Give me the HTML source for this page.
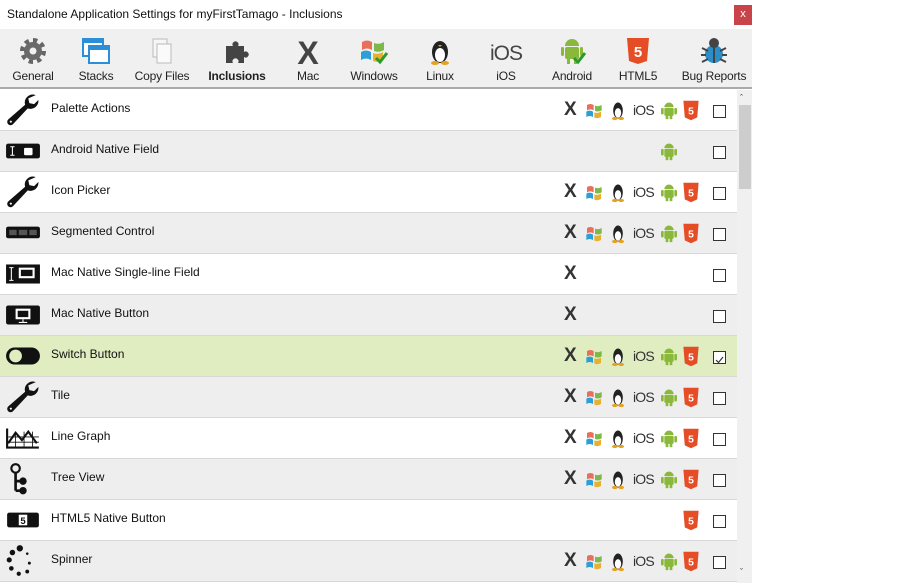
<!DOCTYPE html>
<html><head><meta charset="utf-8"><style>
*{margin:0;padding:0;box-sizing:border-box}
body{width:913px;height:583px;overflow:hidden;background:#fff;font-family:"Liberation Sans",sans-serif;position:relative}
.title{position:absolute;left:7px;top:7px;font-size:12px;color:#111}
.close{position:absolute;left:734px;top:5px;width:18px;height:20px;background:#c9444a;color:#fff;font-size:11px;text-align:center;line-height:19px}
.tb{position:absolute;left:0;top:29px;width:752px;height:60px;background:#f0f0f0;border-bottom:2px solid #aaa}
.tbi{position:absolute;top:7px;width:80px;margin-left:-40px;text-align:center;font-size:12px;color:#222;letter-spacing:-0.2px}
.tbi svg{display:block;margin:0 auto 3px;height:30px}
.row{position:absolute;left:0;width:737px;height:41px;border-bottom:1px solid #d8d8d8}
.row .n{position:absolute;left:51px;top:11px;font-size:12px;color:#111}
.row .ic{position:absolute;left:5px;top:4px;width:36px;height:32px}
.pl{position:absolute;top:11px}
.cb{position:absolute;left:713px;top:15px;width:13px;height:13px;border:1px solid #333;background:#fff}
.ios{font-size:14px;color:#333;letter-spacing:-0.8px}
.sb{position:absolute;left:737px;top:90px;width:15px;height:493px;background:#f0f0f0}
.th{position:absolute;left:739px;top:105px;width:12px;height:84px;background:#cdcdcd}
</style></head><body>
<div class="title">Standalone Application Settings for myFirstTamago - Inclusions</div>
<div class="close">x</div>
<div class="tb">
<div class="tbi" style="left:33px"><svg viewBox="0 0 30 30" width="30"><circle cx="15" cy="15" r="10" fill="none" stroke="#666" stroke-width="6" stroke-dasharray="4 3.8"/><circle cx="15" cy="15" r="9" fill="#6a6a6a"/><circle cx="15" cy="15" r="3.5" fill="#f0f0f0"/></svg>General</div>
<div class="tbi" style="left:96px"><svg viewBox="0 0 30 30" width="30"><rect x="2" y="3" width="20" height="17" fill="#fff" stroke="#2a8fd8" stroke-width="2"/><rect x="2" y="3" width="20" height="4" fill="#2a8fd8"/><rect x="8" y="10" width="20" height="17" fill="#fff" stroke="#2a8fd8" stroke-width="2"/><rect x="8" y="10" width="20" height="4" fill="#2a8fd8"/></svg>Stacks</div>
<div class="tbi" style="left:162px"><svg viewBox="0 0 30 30" width="30"><rect x="6" y="3" width="14" height="18" fill="#f6f6f6" stroke="#bbb"/><rect x="10" y="8" width="14" height="19" fill="#fafafa" stroke="#bbb"/></svg>Copy Files</div>
<div class="tbi" style="left:237px;font-weight:bold"><svg viewBox="0 0 30 30" width="30"><path d="M4 10h7a3 3 0 1 1 5 0h6v6a3 3 0 1 1 0 5v6h-6a3 3 0 1 0-5 0H4z" fill="#444"/></svg>Inclusions</div>
<div class="tbi" style="left:308px"><svg viewBox="0 0 30 30" width="30"><text x="15" y="28" font-size="32" font-weight="bold" text-anchor="middle" fill="#444" font-family="Liberation Sans" transform="scale(1,1)">X</text></svg>Mac</div>
<div class="tbi" style="left:374px"><svg viewBox="0 0 30 30" width="30"><path d="M3 6q5-3 10 0v8q-5-3-10 0z" fill="#e8705a"/><path d="M15 7q5 2 10-1v8q-5 3-10 1z" fill="#7cb84a"/><path d="M2 16q5-3 10 0v8q-5-3-10 0z" fill="#2a9fd8"/><path d="M14 17q5 2 10-1v8q-5 3-10 1z" fill="#e8b030"/><path d="M17 22l4 4 7-9" stroke="#2a9a2a" stroke-width="3" fill="none"/></svg>Windows</div>
<div class="tbi" style="left:440px"><svg viewBox="0 0 30 30" width="30"><ellipse cx="15" cy="16" rx="8" ry="11" fill="#222"/><ellipse cx="15" cy="19" rx="5" ry="7" fill="#fff"/><ellipse cx="10" cy="27" rx="4" ry="2" fill="#e8a020"/><ellipse cx="20" cy="27" rx="4" ry="2" fill="#e8a020"/><path d="M13 9h4l-2 2z" fill="#e8a020"/></svg>Linux</div>
<div class="tbi" style="left:506px"><svg viewBox="0 0 34 30" width="34"><text x="17" y="24" font-size="21" text-anchor="middle" fill="#444" font-family="Liberation Sans" letter-spacing="-1">iOS</text></svg>iOS</div>
<div class="tbi" style="left:572px"><svg viewBox="0 0 30 30" width="30"><path d="M8 10a7 7 0 0 1 14 0z" fill="#8ab83a"/><rect x="8" y="11" width="14" height="12" rx="2" fill="#8ab83a"/><rect x="4" y="11" width="3" height="9" rx="1.5" fill="#8ab83a"/><rect x="23" y="11" width="3" height="9" rx="1.5" fill="#8ab83a"/><rect x="10" y="22" width="3" height="6" fill="#8ab83a"/><rect x="17" y="22" width="3" height="6" fill="#8ab83a"/><path d="M17 22l4 4 7-9" stroke="#2a9a2a" stroke-width="3" fill="none"/></svg>Android</div>
<div class="tbi" style="left:638px"><svg viewBox="0 0 30 30" width="30"><path d="M4 2h22l-2 23-9 3-9-3z" fill="#e44d26"/><text x="15" y="21" font-size="15" font-weight="bold" text-anchor="middle" fill="#fff" font-family="Liberation Sans">5</text></svg>HTML5</div>
<div class="tbi" style="left:714px"><svg viewBox="0 0 30 30" width="30"><ellipse cx="15" cy="18" rx="9" ry="9" fill="#2a8fc8"/><circle cx="15" cy="7" r="5" fill="#444"/><path d="M3 12l6 3M27 12l-6 3M2 19h5M28 19h-5M3 26l6-3M27 26l-6-3M15 9v18" stroke="#444" stroke-width="2"/></svg>Bug Reports</div>
</div>

<div id="rows"></div>
<div class="sb"></div><div class="th"></div>
<div style="position:absolute;left:740px;top:93px;font-size:9px;color:#333">&#710;</div>
<div style="position:absolute;left:740px;top:567px;font-size:9px;color:#333">&#711;</div>

<script>
var X='<span class="pl" style="left:564px;font:bold 19px Liberation Sans;color:#333;top:9px">X</span>';
var W='<svg class="pl" style="left:585px;top:11px" width="20" height="20" viewBox="0 0 30 30"><path d="M3 6q5-3 10 0v8q-5-3-10 0z" fill="#e8705a"/><path d="M15 7q5 2 10-1v8q-5 3-10 1z" fill="#7cb84a"/><path d="M2 16q5-3 10 0v8q-5-3-10 0z" fill="#2a9fd8"/><path d="M14 17q5 2 10-1v8q-5 3-10 1z" fill="#e8b030"/></svg>';
var L='<svg class="pl" style="left:610px;top:10px" width="16" height="21" viewBox="0 0 20 26"><ellipse cx="10" cy="13" rx="6" ry="10" fill="#222"/><ellipse cx="10" cy="16" rx="4" ry="6" fill="#fff"/><ellipse cx="6" cy="23" rx="3.5" ry="2" fill="#e8a020"/><ellipse cx="14" cy="23" rx="3.5" ry="2" fill="#e8a020"/></svg>';
var I='<span class="pl ios" style="left:633px;top:12px">iOS</span>';
var A='<svg class="pl" style="left:659px;top:10px" width="20" height="21" viewBox="0 0 30 30"><path d="M8 10a7 7 0 0 1 14 0z" fill="#8ab83a"/><rect x="8" y="11" width="14" height="12" rx="2" fill="#8ab83a"/><rect x="3" y="11" width="4" height="10" rx="2" fill="#8ab83a"/><rect x="23" y="11" width="4" height="10" rx="2" fill="#8ab83a"/><rect x="10" y="22" width="4" height="6" fill="#8ab83a"/><rect x="16" y="22" width="4" height="6" fill="#8ab83a"/></svg>';
var H='<svg class="pl" style="left:682px;top:10px" width="18" height="21" viewBox="0 0 26 30"><path d="M2 1h22l-2 24-9 4-9-4z" fill="#e44d26"/><text x="13" y="21" font-size="15" font-weight="bold" text-anchor="middle" fill="#fff" font-family="Liberation Sans">5</text></svg>';
var ALL=X+W+L+I+A+H;
var wr='<svg class="ic" viewBox="0 0 34 30"><path d="M29 1a7.5 7.5 0 0 0-10 9L3 24a2.8 2.8 0 0 0 4.5 4.5l14-15a7.5 7.5 0 0 0 10-8l-4 4-4.5-1-1-4.5z" fill="#111"/><circle cx="5.5" cy="26" r="1" fill="#fff"/></svg>';
var ic={
w:wr,
an:'<svg class="ic" viewBox="0 0 34 30"><rect x="1" y="8" width="32" height="14" rx="2" fill="#111"/><path d="M7 11v8M5 11h4M5 19h4" stroke="#fff"/><rect x="18" y="12" width="8" height="7" rx="1" fill="#fff"/></svg>',
sg:'<svg class="ic" viewBox="0 0 34 30"><rect x="1" y="9" width="32" height="11" rx="2" fill="#111"/><rect x="4" y="12" width="7" height="5" fill="#555"/><rect x="13" y="12" width="8" height="5" fill="#555"/><rect x="23" y="12" width="7" height="5" fill="#555"/></svg>',
ms:'<svg class="ic" viewBox="0 0 34 30"><rect x="1" y="6" width="32" height="18" fill="#111"/><path d="M6 9v12M4 9h4M4 21h4" stroke="#fff"/><rect x="13" y="9" width="15" height="10" fill="#fff"/><rect x="15" y="11" width="11" height="6" fill="#111"/></svg>',
mb:'<svg class="ic" viewBox="0 0 34 30"><rect x="1" y="6" width="32" height="18" rx="2" fill="#111"/><rect x="10" y="9" width="14" height="10" fill="#fff"/><rect x="12" y="11" width="10" height="6" fill="#111"/><path d="M17 19v3M13 22h8" stroke="#fff"/></svg>',
sw:'<svg class="ic" viewBox="0 0 34 30"><rect x="1" y="7" width="32" height="16" rx="8" fill="#111"/><circle cx="10" cy="15" r="6" fill="#e0edc0"/></svg>',
lg:'<svg class="ic" viewBox="0 0 34 30"><path d="M2 6v18h30" stroke="#111" stroke-width="2" fill="none"/><path d="M3 20l7-10 6 7 6-8 8 11" stroke="#111" stroke-width="2" fill="none"/><path d="M3 14h29M3 19h29M10 9v14M18 9v14M26 9v14" stroke="#111" stroke-width=".8"/></svg>',
tv:'<svg class="ic" viewBox="0 0 34 30"><circle cx="10" cy="5" r="4" fill="none" stroke="#111" stroke-width="2"/><path d="M10 9v17M10 17h6M10 26h6" stroke="#111" stroke-width="2.5"/><circle cx="17" cy="17" r="3.5" fill="#111"/><circle cx="17" cy="26" r="3.5" fill="#111"/></svg>',
h5:'<svg class="ic" viewBox="0 0 34 30"><rect x="2" y="8" width="30" height="14" rx="2" fill="#111"/><rect x="13" y="10" width="8" height="10" fill="#fff"/><text x="17" y="19" font-size="9" font-weight="bold" text-anchor="middle" fill="#111" font-family="Liberation Sans">5</text></svg>',
sp:'<svg class="ic" viewBox="0 0 34 30"><circle cx="14" cy="3" r="3" fill="#111"/><circle cx="7" cy="7" r="2.6" fill="#111"/><circle cx="4" cy="14" r="2.4" fill="#111"/><circle cx="6" cy="22" r="2.2" fill="#111"/><circle cx="13" cy="27" r="2" fill="#111"/><circle cx="21" cy="25" r="1.8" fill="#111"/><circle cx="23" cy="17" r="1.4" fill="#111"/><circle cx="21" cy="8" r="1.2" fill="#111"/></svg>'
};
var R=[['w','Palette Actions',ALL],['an','Android Native Field',A],['w','Icon Picker',ALL],['sg','Segmented Control',ALL],['ms','Mac Native Single-line Field',X],['mb','Mac Native Button',X],['sw','Switch Button',ALL,1],['w','Tile',ALL],['lg','Line Graph',ALL],['tv','Tree View',ALL],['h5','HTML5 Native Button',H],['sp','Spinner',ALL]];
var h='';
R.forEach(function(r,i){
var bg=r[3]?'#e0edc0':(i%2?'#eeeeee':'#fff');
h+='<div class="row" style="top:'+(90+i*41)+'px;background:'+bg+'">'+ic[r[0]]+'<span class="n">'+r[1]+'</span>'+r[2]+'<div class="cb">'+(r[3]?'<svg width="11" height="11" viewBox="0 0 11 11"><path d="M2 6l2.5 2.5L9 3" stroke="#333" fill="none" stroke-width="1.2"/></svg>':'')+'</div></div>';
});
document.getElementById('rows').innerHTML=h;
</script>
</body></html>
